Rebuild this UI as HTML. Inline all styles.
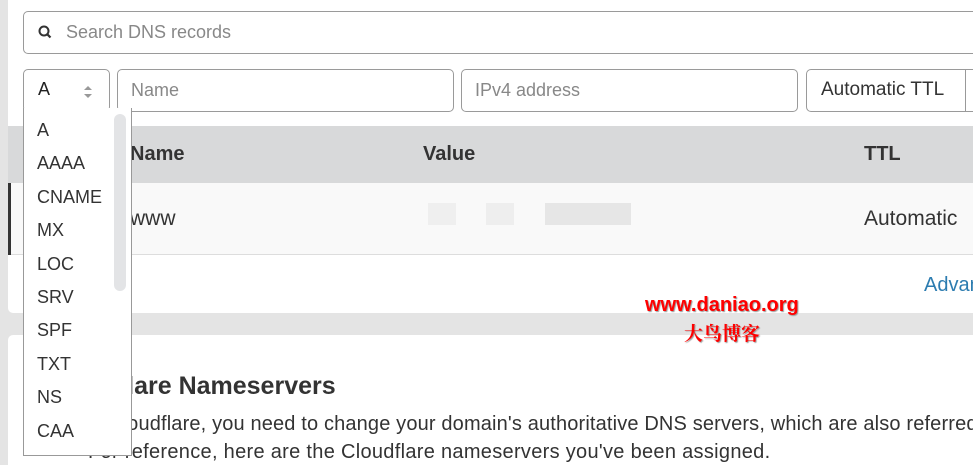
<!DOCTYPE html>
<html><head><style>
*{margin:0;padding:0;box-sizing:border-box}
body{width:973px;height:456px;overflow:hidden;background:#e4e4e4;font-family:"Liberation Sans",sans-serif;color:#333;position:relative}
.abs{position:absolute}
.card1{left:8px;top:0;width:980px;height:313px;background:#fff;border-radius:0 0 0 5px}
.card2{left:8px;top:335px;width:980px;height:130px;background:#fff;border-radius:5px 0 0 0}
.inp{position:absolute;border:1px solid #9a9a9a;border-radius:5px;background:#fff;font-size:18px;color:#888}
</style></head><body>
<div class="abs card1"></div>
<div class="abs card2"></div>
<div class="inp" style="left:23px;top:11px;width:970px;height:43px;">
 <svg class="abs" style="left:14px;top:13px" width="14" height="14" viewBox="0 0 14 14"><circle cx="6" cy="6" r="4.5" fill="none" stroke="#333" stroke-width="2"/><path d="M9.3 9.3L12.5 12.5" stroke="#333" stroke-width="2.2"/></svg>
 <span class="abs" style="left:42px;top:10px">Search DNS records</span></div>
<div class="inp" style="left:23px;top:69px;width:87px;height:43px;color:#222"><span class="abs" style="left:14px;top:9px">A</span>
 <svg class="abs" style="left:58px;top:14px" width="12" height="16" viewBox="0 0 12 16"><path d="M2 6L6 2L10 6Z M2 10L6 14L10 10Z" fill="#999"/></svg></div>
<div class="inp" style="left:117px;top:69px;width:337px;height:43px"><span class="abs" style="left:13px;top:10px">Name</span></div>
<div class="inp" style="left:461px;top:69px;width:337px;height:43px"><span class="abs" style="left:13px;top:10px">IPv4 address</span></div>
<div class="inp" style="left:806px;top:69px;width:200px;height:43px;color:#333;font-size:19px"><span class="abs" style="left:14px;top:9px">Automatic TTL</span><div class="abs" style="left:158px;top:0;width:1px;height:41px;background:#999"></div></div>
<div class="abs" style="left:8px;top:126px;width:965px;height:57px;background:#d8d9da"></div>
<div class="abs" style="left:130px;top:143px;font-weight:bold;font-size:20px">Name</div>
<div class="abs" style="left:423px;top:143px;font-weight:bold;font-size:20px">Value</div>
<div class="abs" style="left:864px;top:143px;font-weight:bold;font-size:20px">TTL</div>
<div class="abs" style="left:8px;top:183px;width:965px;height:72px;background:#f9f9f9;border-bottom:1px solid #ddd"></div>
<div class="abs" style="left:8px;top:183px;width:3px;height:72px;background:#333"></div>
<div class="abs" style="left:130px;top:207px;font-size:21px">www</div>
<div class="abs" style="left:428px;top:203px;width:28px;height:22px;background:#efefef"></div>
<div class="abs" style="left:486px;top:203px;width:28px;height:22px;background:#eee"></div>
<div class="abs" style="left:545px;top:203px;width:86px;height:22px;background:#e6e6e6"></div>
<div class="abs" style="left:864px;top:207px;font-size:21px">Automatic</div>
<div class="abs" style="left:924px;top:274px;font-size:20px;color:#2c7cb0">Advanced</div>
<div class="abs" style="left:645px;top:294px;font-size:20px;font-weight:bold;color:#f00;text-shadow:1px 1px 1px #999">www.daniao.org</div>
<div class="abs" style="left:684px;top:319px;font-size:19px;color:#f00;font-family:'Noto Serif CJK SC',serif;font-weight:bold;text-shadow:1px 1px 1px #999">大鸟博客</div>
<div class="abs" style="left:48px;top:372px;font-weight:bold;font-size:25px;white-space:nowrap">Cloudflare Nameservers</div>
<div class="abs" style="left:108px;top:413px;font-size:20px;white-space:nowrap;letter-spacing:0.15px">Cloudflare, you need to change your domain's authoritative DNS servers, which are also referred</div>
<div class="abs" style="left:88px;top:441px;font-size:20px;white-space:nowrap;letter-spacing:0.3px">For reference, here are the Cloudflare nameservers you've been assigned.</div>
<div class="abs" style="left:23px;top:108px;width:109px;height:348px;background:#fff;border:1px solid #999;border-top:none;font-size:18px;color:#333">
 <div class="abs" style="left:90px;top:6px;width:12px;height:177px;background:#e3e4e6;border-radius:6px"></div>
 <div class="abs" style="left:13px;top:6px;line-height:33.4px">A<br>AAAA<br>CNAME<br>MX<br>LOC<br>SRV<br>SPF<br>TXT<br>NS<br>CAA</div>
</div>
<div class="abs" style="left:0;top:0;width:8px;height:456px;background:#e4e4e4"></div>
</body></html>
